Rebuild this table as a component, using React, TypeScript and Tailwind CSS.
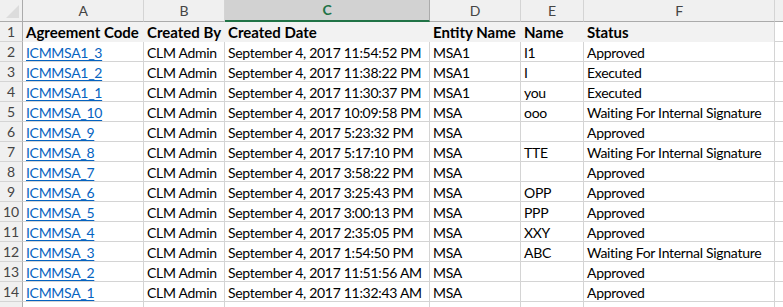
import React from 'react';

type Row = [string, string, string, string, string, string];

const rows: Row[] = [
  ['ICMMSA1_3', 'CLM Admin', 'September 4, 2017 11:54:52 PM', 'MSA1', 'I1', 'Approved'],
  ['ICMMSA1_2', 'CLM Admin', 'September 4, 2017 11:38:22 PM', 'MSA1', 'I', 'Executed'],
  ['ICMMSA1_1', 'CLM Admin', 'September 4, 2017 11:30:37 PM', 'MSA1', 'you', 'Executed'],
  ['ICMMSA_10', 'CLM Admin', 'September 4, 2017 10:09:58 PM', 'MSA', 'ooo', 'Waiting For Internal Signature'],
  ['ICMMSA_9', 'CLM Admin', 'September 4, 2017 5:23:32 PM', 'MSA', '', 'Approved'],
  ['ICMMSA_8', 'CLM Admin', 'September 4, 2017 5:17:10 PM', 'MSA', 'TTE', 'Waiting For Internal Signature'],
  ['ICMMSA_7', 'CLM Admin', 'September 4, 2017 3:58:22 PM', 'MSA', '', 'Approved'],
  ['ICMMSA_6', 'CLM Admin', 'September 4, 2017 3:25:43 PM', 'MSA', 'OPP', 'Approved'],
  ['ICMMSA_5', 'CLM Admin', 'September 4, 2017 3:00:13 PM', 'MSA', 'PPP', 'Approved'],
  ['ICMMSA_4', 'CLM Admin', 'September 4, 2017 2:35:05 PM', 'MSA', 'XXY', 'Approved'],
  ['ICMMSA_3', 'CLM Admin', 'September 4, 2017 1:54:50 PM', 'MSA', 'ABC', 'Waiting For Internal Signature'],
  ['ICMMSA_2', 'CLM Admin', 'September 4, 2017 11:51:56 AM', 'MSA', '', 'Approved'],
  ['ICMMSA_1', 'CLM Admin', 'September 4, 2017 11:32:43 AM', 'MSA', '', 'Approved'],
];

const headers = ['Agreement Code', 'Created By', 'Created Date', 'Entity Name', 'Name', 'Status'];
const letters = ['A', 'B', 'C', 'D', 'E', 'F'];

// column grid shared by every row (widths include the right border)
const cols = 'grid grid-cols-[23px_121px_81px_205px_91px_63px_191px_1fr]';

function ColumnHeader() {
  return (
    <div className={`${cols} h-[22px]`}>
      <div className="relative bg-[#f0f0f0] border-r border-b border-[#ababab]">
        <div className="absolute right-[3px] bottom-[3px] w-0 h-0 border-l-[13px] border-l-transparent border-b-[13px] border-b-[#dcdcdc]" />
      </div>
      {letters.map((l) =>
        l === 'C' ? (
          <div
            key={l}
            className="flex items-center justify-center bg-[#d2d2d2] border-r border-[#ababab] border-b-2 border-b-[#217346] text-[#217346] text-[14px] font-bold"
          >
            {l}
          </div>
        ) : (
          <div
            key={l}
            className="flex items-center justify-center bg-[#f0f0f0] border-r border-[#d4d4d4] border-b border-b-[#ababab] text-[#444] text-[14px]"
          >
            {l}
          </div>
        )
      )}
      <div className="bg-[#f0f0f0] border-b border-[#ababab]" />
    </div>
  );
}

function RowNum({ n }: { n?: number }) {
  return (
    <div className="flex items-end justify-center pb-[2px] bg-[#f0f0f0] border-r border-[#ababab] border-b border-b-[#d4d4d4] text-[#444] text-[14px] tracking-normal">
      {n}
    </div>
  );
}

export default function App() {
  return (
    <div className="w-[783px] h-[307px] overflow-hidden bg-white font-['Lato',sans-serif] text-[14px] tracking-[-0.3px] text-black leading-none">
      <ColumnHeader />

      {/* row 1: filled header cells, gridlines hidden */}
      <div className={`${cols} h-[20px]`}>
        <RowNum n={1} />
        {headers.map((h, i) => (
          <div
            key={h}
            className={`flex items-end pb-[2px] pl-[3px] bg-[#f2f2f2] font-bold text-[15px] tracking-normal whitespace-nowrap ${i === 5 ? 'border-r border-[#d4d4d4]' : ''}`}
          >
            {h}
          </div>
        ))}
        <div className="border-b border-[#d4d4d4]" />
      </div>

      {rows.map((r, idx) => (
        <div key={idx} className={`${cols} h-[20px]`}>
          <RowNum n={idx + 2} />
          {r.map((v, i) => (
            <div
              key={i}
              className={`flex items-end pb-[1px] pl-[3px] border-r border-b border-[#d4d4d4] whitespace-nowrap ${
                i === 0 ? 'text-[#0563c1] underline underline-offset-[2px]' : ''
              }`}
            >
              {v}
            </div>
          ))}
          <div className="border-b border-[#d4d4d4]" />
        </div>
      ))}

      {/* partially visible next row */}
      <div className={`${cols} h-[20px]`}>
        <RowNum />
        {letters.map((l) => (
          <div key={l} className="border-r border-[#d4d4d4]" />
        ))}
        <div />
      </div>
    </div>
  );
}
